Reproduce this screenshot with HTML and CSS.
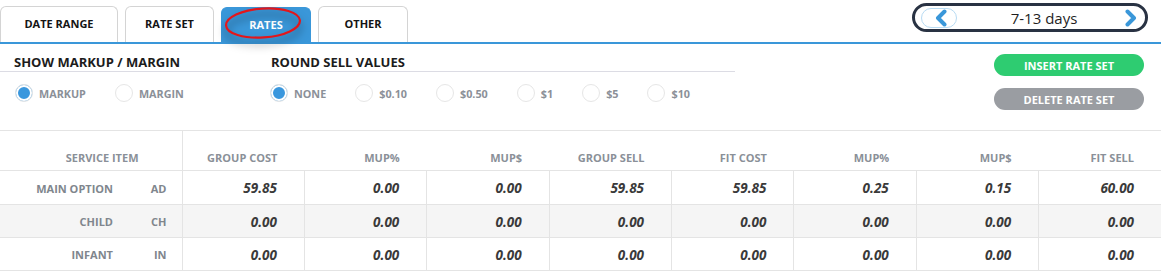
FILE: index.html
```html
<!DOCTYPE html>
<html>
<head>
<meta charset="utf-8">
<link rel="stylesheet" href="styles.css">
</head>
<body>
<div class="tabbar">
  <div class="tab tab-date">DATE RANGE</div>
  <div class="tab tab-rs">RATE SET</div>
  <div class="tab tab-active">RATES</div>
  <div class="tab tab-other">OTHER</div>
  <svg class="annot" width="90" height="52" viewBox="0 0 90 52">
    <ellipse cx="43" cy="21" rx="37" ry="14.5" transform="rotate(-4 43 21)" fill="none" stroke="#e3161b" stroke-width="2.2"/>
  </svg>
  <div class="pager">
    <div class="pager-btn">
      <svg width="14" height="18" viewBox="0 0 14 18"><path d="M10.5 2.5 L4 9 L10.5 15.5" fill="none" stroke="#3a97d9" stroke-width="4" stroke-linecap="round" stroke-linejoin="round"/></svg>
    </div>
    <div class="pager-text">7-13 days</div>
    <div class="pager-next">
      <svg width="14" height="18" viewBox="0 0 14 18"><path d="M3.5 2.5 L10 9 L3.5 15.5" fill="none" stroke="#3a97d9" stroke-width="4" stroke-linecap="round" stroke-linejoin="round"/></svg>
    </div>
  </div>
</div>

<div class="options">
  <div class="group group-mu">
    <div class="group-title">SHOW MARKUP / MARGIN</div>
    <div class="radios">
      <div class="radio-item"><span class="radio checked"></span><span class="radio-label">MARKUP</span></div>
      <div class="radio-item"><span class="radio"></span><span class="radio-label">MARGIN</span></div>
    </div>
  </div>
  <div class="group group-round">
    <div class="group-title">ROUND SELL VALUES</div>
    <div class="radios">
      <div class="radio-item"><span class="radio checked"></span><span class="radio-label">NONE</span></div>
      <div class="radio-item"><span class="radio"></span><span class="radio-label">$0.10</span></div>
      <div class="radio-item"><span class="radio"></span><span class="radio-label">$0.50</span></div>
      <div class="radio-item"><span class="radio"></span><span class="radio-label">$1</span></div>
      <div class="radio-item"><span class="radio"></span><span class="radio-label">$5</span></div>
      <div class="radio-item"><span class="radio"></span><span class="radio-label">$10</span></div>
    </div>
  </div>
  <div class="buttons">
    <div class="btn btn-insert">INSERT RATE SET</div>
    <div class="btn btn-delete">DELETE RATE SET</div>
  </div>
</div>

<table class="rates">
  <colgroup>
    <col class="c-name"><col class="c-code">
    <col class="c-val"><col class="c-val"><col class="c-val"><col class="c-val">
    <col class="c-val"><col class="c-val"><col class="c-val"><col class="c-val">
  </colgroup>
  <thead>
    <tr>
      <th colspan="2" class="h-service">SERVICE ITEM</th>
      <th class="h-first">GROUP COST</th>
      <th>MUP%</th>
      <th>MUP$</th>
      <th>GROUP SELL</th>
      <th>FIT COST</th>
      <th>MUP%</th>
      <th>MUP$</th>
      <th>FIT SELL</th>
    </tr>
  </thead>
  <tbody>
    <tr>
      <td class="name">MAIN OPTION</td><td class="code">AD</td>
      <td class="val">59.85</td><td class="val">0.00</td><td class="val">0.00</td><td class="val">59.85</td>
      <td class="val">59.85</td><td class="val">0.25</td><td class="val">0.15</td><td class="val">60.00</td>
    </tr>
    <tr class="alt">
      <td class="name">CHILD</td><td class="code">CH</td>
      <td class="val">0.00</td><td class="val">0.00</td><td class="val">0.00</td><td class="val">0.00</td>
      <td class="val">0.00</td><td class="val">0.00</td><td class="val">0.00</td><td class="val">0.00</td>
    </tr>
    <tr>
      <td class="name">INFANT</td><td class="code">IN</td>
      <td class="val">0.00</td><td class="val">0.00</td><td class="val">0.00</td><td class="val">0.00</td>
      <td class="val">0.00</td><td class="val">0.00</td><td class="val">0.00</td><td class="val">0.00</td>
    </tr>
  </tbody>
</table>
</body>
</html>
```

FILE: styles.css
```css
* { box-sizing: border-box; }
html, body { margin: 0; padding: 0; background: #fff; }
body {
  font-family: "Open Sans", "Liberation Sans", sans-serif;
  width: 1161px;
  height: 272px;
  overflow: hidden;
}

/* Tabs */
.tabbar {
  position: relative;
  display: flex;
  align-items: flex-end;
  height: 44px;
  border-bottom: 2px solid #3a97d9;
}
.tab {
  height: 36px;
  margin-right: 7px;
  border: 1px solid #d4d4d4;
  border-bottom: none;
  border-radius: 6px 6px 0 0;
  display: flex;
  align-items: center;
  justify-content: center;
  font-size: 11px;
  font-weight: 700;
  color: #141414;
  padding-bottom: 2px;
}
.tab-date { width: 118px; }
.tab-rs { width: 89px; }
.tab-active {
  width: 90px;
  height: 35px;
  background: #3a97d9;
  border-color: #3a97d9;
  color: #fff;
}
.tab-other { width: 90px; }

.annot {
  position: absolute;
  left: 220px;
  top: 2px;
  filter: drop-shadow(0 6px 4px rgba(0, 0, 0, 0.5));
}

.pager {
  align-self: flex-start;
  margin-top: 3px;
  margin-left: auto;
  margin-right: 13px;
  width: 236px;
  height: 29px;
  border: 3px solid #293243;
  border-radius: 15px;
  display: flex;
  align-items: center;
  padding: 0 6px;
}
.pager-btn {
  width: 36px;
  height: 20px;
  border: 1px solid #b8dbf3;
  border-radius: 10px;
  display: flex;
  align-items: center;
  justify-content: center;
  padding-left: 4px;
}
.pager-text {
  flex: 1;
  text-align: center;
  font-size: 15px;
  color: #1f1f1f;
  padding-left: 8px;
}
.pager-next {
  width: 16px;
  height: 20px;
  display: flex;
  align-items: center;
  justify-content: center;
}

/* Options */
.options {
  display: flex;
  height: 86px;
}
.group-title {
  height: 28px;
  padding-top: 9px;
  font-size: 13px;
  font-weight: 700;
  color: #1c1c1c;
  border-bottom: 1px solid #dcdce4;
  line-height: 18px;
}
.group-mu { width: 230px; }
.group-mu .group-title { padding-left: 14px; }
.group-round { width: 485px; margin-left: 20px; }
.group-round .group-title { padding-left: 21px; }
.radios {
  display: flex;
  align-items: center;
  gap: 29px;
  padding-top: 12px;
}
.group-mu .radios { padding-left: 15px; }
.group-round .radios { padding-left: 20px; }
.radio-item {
  display: flex;
  align-items: center;
  gap: 6px;
}
.radio {
  width: 18px;
  height: 18px;
  border-radius: 50%;
  border: 1px solid #e6e6e6;
  background: #fff;
}
.radio.checked {
  background: #3a97dd;
  box-shadow: inset 0 0 0 2px #fff;
}
.radio-label {
  font-size: 10.8px;
  font-weight: 700;
  color: #8b9098;
}

.buttons {
  margin-left: auto;
  margin-right: 17px;
  padding-top: 10px;
  display: flex;
  flex-direction: column;
  gap: 12px;
}
.btn {
  width: 150px;
  height: 22px;
  border-radius: 11px;
  color: #fff;
  font-size: 11px;
  font-weight: 700;
  display: flex;
  align-items: center;
  justify-content: center;
}
.btn-insert { background: #2ecc71; }
.btn-delete { background: #9a9da2; }

/* Table */
.rates {
  width: 1161px;
  border-collapse: collapse;
  table-layout: fixed;
}
.c-name { width: 125px; }
.c-code { width: 57px; }
.rates thead tr { height: 40px; border-top: 1px solid #e4e4e4; border-bottom: 1px solid #e4e4e4; }
.rates th {
  font-size: 11px;
  font-weight: 700;
  color: #8a9098;
  text-align: right;
  vertical-align: bottom;
  padding: 0 27px 5px 0;
  line-height: 15px;
}
.rates th.h-service { padding-right: 43px; border-right: 1px solid #e4e4e4; }
.rates tbody tr { height: 33px; border-bottom: 1px solid #e4e4e4; }
.rates tbody tr:first-child { height: 34px; }
.rates tbody tr.alt { background: #f5f5f5; }
.rates td {
  padding: 0;
  text-align: right;
  vertical-align: middle;
}
.rates td.name {
  font-size: 11px;
  font-weight: 700;
  color: #80868d;
  padding-right: 12px;
  padding-top: 1px;
}
.rates td.code {
  font-size: 11px;
  font-weight: 700;
  color: #80868d;
  padding-right: 15px;
  padding-top: 1px;
  border-right: 1px solid #e4e4e4;
}
.rates td.val {
  font-size: 13.5px;
  font-weight: 700;
  font-style: italic;
  color: #3a3a3a;
  padding-right: 27px;
  padding-top: 1px;
  border-right: 1px solid #e4e4e4;
}
.rates td.val:last-child { border-right: none; }
```
